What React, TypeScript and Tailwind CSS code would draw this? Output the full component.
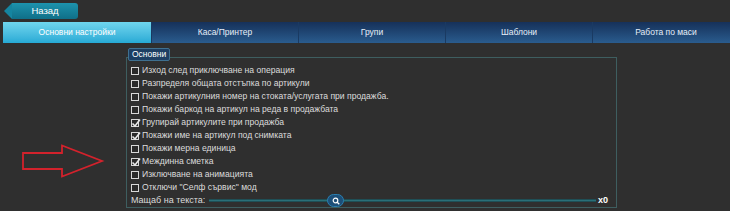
import React from 'react';

const tabs = ['Основни настройки', 'Каса/Принтер', 'Групи', 'Шаблони', 'Работа по маси'];

const options: { label: string; checked: boolean }[] = [
  { label: 'Изход след приключване на операция', checked: false },
  { label: 'Разпределя общата отстъпка по артикули', checked: false },
  { label: 'Покажи артикулния номер на стоката/услугата при продажба.', checked: false },
  { label: 'Покажи баркод на артикул на реда в продажбата', checked: false },
  { label: 'Групирай артикулите при продажба', checked: true },
  { label: 'Покажи име на артикул под снимката', checked: true },
  { label: 'Покажи мерна единица', checked: false },
  { label: 'Междинна сметка', checked: true },
  { label: 'Изключване на анимацията', checked: false },
  { label: 'Отключи "Селф сървис" мод', checked: false },
];

const Box = ({ checked }: { checked: boolean }) => (
  <span className="relative w-[8px] h-[8px] border border-[#d8d8d8] bg-[#2a2a2a] shrink-0">
    {checked && (
      <svg viewBox="0 0 10 10" className="absolute -top-[2px] -left-[1px] w-[10px] h-[10px]">
        <path d="M1.5 5.5 L4 8 L9 1.5" stroke="#e8e8e8" strokeWidth="1.6" fill="none" />
      </svg>
    )}
  </span>
);

export default function App() {
  return (
    <div
      className="w-[730px] h-[211px] bg-[#2f2f2f] overflow-hidden relative text-white"
      style={{ fontFamily: '"Liberation Sans", Arial, sans-serif' }}
    >
      <div className="pt-[3px] pl-[4px]">
        <div className="flex items-center">
          <svg width="8" height="16" viewBox="0 0 8 16" className="block">
            <path d="M8 0 L0 8 L8 16 Z" fill="#1585a0" />
          </svg>
          <div className="h-[16px] w-[66px] bg-gradient-to-b from-[#1d93ad] to-[#0f6f88] rounded-r-[3px] flex items-center justify-center text-[9.5px]">
            Назад
          </div>
        </div>
      </div>

      <div className="mt-[3px] ml-[3px] h-[21px] flex w-[740px] bg-gradient-to-b from-[#16315a] to-[#2a5c8e]">
        {tabs.map((t, i) => (
          <div
            key={t}
            className={
              i === 0
                ? 'w-[148px] shrink-0 flex items-center justify-center text-[8.5px] bg-gradient-to-b from-[#6fd6ee] to-[#25aad5] text-white'
                : 'w-[147px] shrink-0 flex items-center justify-center text-[8.5px] text-[#e6eef8] border-l border-[#1a3a62]'
            }
          >
            {t}
          </div>
        ))}
      </div>

      <svg className="absolute left-[21px] top-[144px]" width="84" height="36" viewBox="0 0 84 36">
        <path
          d="M2 9 L41 9 L41 1.5 L81 17 L41 32.5 L41 25 L2 25 Z"
          fill="none"
          stroke="#d3222c"
          strokeWidth="1.8"
          strokeLinejoin="miter"
        />
      </svg>

      <div className="relative ml-[126px] mt-[14px] w-[491px] h-[151px] border border-[#3e5e60]">
        <div className="absolute -top-[10px] left-[1px] h-[13px] px-[3px] bg-[#1d3f63] border border-[#3f7090] rounded-[2px] flex items-center text-[8.5px] text-white">
          Основни
        </div>
        <div className="pt-[6px] pl-[4px] flex flex-col">
          {options.map((o) => (
            <div key={o.label} className="h-[13px] flex items-center gap-[3px] text-[8.6px] text-[#dcdcdc] whitespace-nowrap">
              <Box checked={o.checked} />
              <span>{o.label}</span>
            </div>
          ))}
          <div className="h-[13px] flex items-center text-[9px] text-[#dcdcdc] whitespace-nowrap">
            <span className="shrink-0 w-[78px]">Мащаб на текста:</span>
            <div className="relative w-[387px] shrink-0 h-[3px] bg-[#2a6f78] border-y border-[#1f4f56]">
              <div className="absolute left-[118px] -top-[6px] w-[17px] h-[13px] rounded-full bg-[#1d4f78] border border-[#2a7fb0] flex items-center justify-center">
                <svg width="8" height="8" viewBox="0 0 8 8">
                  <circle cx="3.5" cy="3.5" r="2.3" stroke="#ffffff" strokeWidth="1.2" fill="none" />
                  <path d="M5.2 5.2 L7.3 7.3" stroke="#ffffff" strokeWidth="1.3" />
                </svg>
              </div>
            </div>
            <span className="ml-[2px] text-[9px] font-bold text-white">x0</span>
          </div>
        </div>
      </div>
    </div>
  );
}
